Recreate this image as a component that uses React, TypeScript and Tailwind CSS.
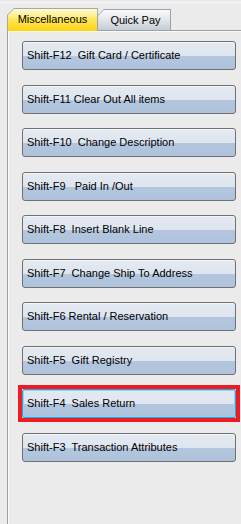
const buttons = [
  'Shift-F12  Gift Card / Certificate',
  'Shift-F11 Clear Out All items',
  'Shift-F10  Change Description',
  'Shift-F9   Paid In /Out',
  'Shift-F8  Insert Blank Line',
  'Shift-F7  Change Ship To Address',
  'Shift-F6 Rental / Reservation',
  'Shift-F5  Gift Registry',
  'Shift-F4  Sales Return',
  'Shift-F3  Transaction Attributes',
];

function Tab({ label, active }: { label: string; active?: boolean }) {
  return (
    <div
      className={
        active
          ? 'relative h-[23px] w-[91px] bg-[#a8a8a8] [clip-path:polygon(7px_0,100%_0,100%_100%,0_100%,0_7px)]'
          : 'relative -ml-px h-[22px] w-[74px] bg-[#9aa3ac] [clip-path:polygon(7px_0,100%_0,100%_100%,0_100%,0_7px)]'
      }
    >
      <div
        className={
          active
            ? 'absolute inset-x-px top-px bottom-0 flex items-center justify-center bg-gradient-to-b from-[#fffbd8] via-[#ffe650] to-[#ffd400] pb-[2px] [clip-path:polygon(6px_0,100%_0,100%_100%,0_100%,0_6px)]'
            : 'absolute inset-x-px top-px bottom-px flex items-center justify-center bg-gradient-to-b from-[#fafbfc] via-[#e2e6ea] to-[#c4ccd4] pl-[3px] [clip-path:polygon(6px_0,100%_0,100%_100%,0_100%,0_6px)]'
        }
      >
        <span className="text-[11px] leading-none text-black">{label}</span>
      </div>
    </div>
  );
}

function ActionButton({ label, hot }: { label: string; hot?: boolean }) {
  return (
    <div className={hot ? 'w-[214px] outline-4 outline-[#ed1c24]' : 'w-[214px]'}>
      <div
        className={
          hot
            ? 'flex h-[29px] items-center rounded-[2px] border border-[#3a9fd6] bg-[linear-gradient(#e2e9f2_0%,#dfe6ef_52%,#b2c5de_53%,#aec2dc_100%)] pl-[4px] shadow-[inset_0_0_0_1px_#7fd8f6]'
            : 'flex h-[29px] items-center rounded-[3px] border border-[#707070] bg-[linear-gradient(#e4eaf2_0%,#dee5ee_52%,#b3c6de_53%,#afc3dc_100%)] pl-[4px] shadow-[inset_0_1px_0_#f4f7fa]'
        }
      >
        <span className="whitespace-pre text-[11px] leading-none text-black">{label}</span>
      </div>
    </div>
  );
}

export default function App() {
  return (
    <div className="flex h-[524px] w-[241px] flex-col overflow-hidden bg-[#ebebeb] font-['Liberation_Sans',Arial,sans-serif]">
      <div className="mt-[2px] h-px bg-[#f7f7f7]" />
      <div className="relative z-10 -mb-px mt-[5px] flex items-end pl-[7px]">
        <Tab label="Miscellaneous" active />
        <Tab label="Quick Pay" />
      </div>
      <div className="ml-[7px] flex-1 border-l border-t border-[#9e9e9e] shadow-[inset_1px_1px_0_#fafafa]">
        <div className="flex flex-col gap-[14.56px] pl-[14px] pt-[10px]">
          {buttons.map((b, i) => (
            <ActionButton key={b} label={b} hot={i === 8} />
          ))}
        </div>
      </div>
    </div>
  );
}
